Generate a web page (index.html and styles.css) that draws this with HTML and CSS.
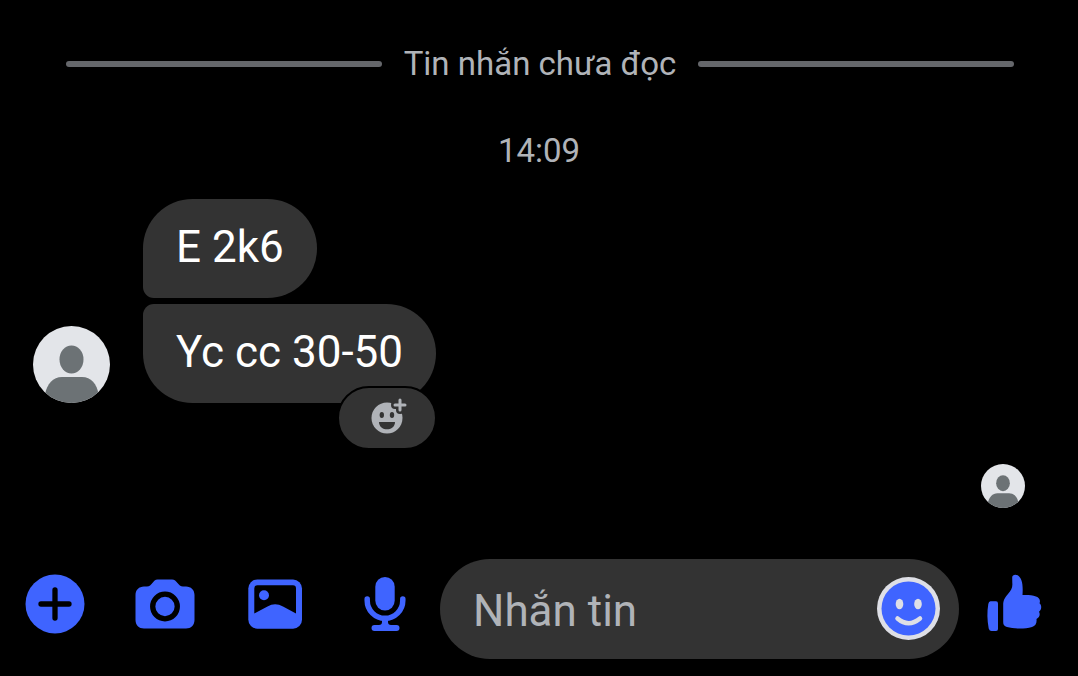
FILE: index.html
```html
<!DOCTYPE html>
<html lang="vi">
<head>
    <meta charset="UTF-8">
    <meta name="viewport" content="width=device-width, initial-scale=1.0">
    <title>Tin nhắn</title>
    <link rel="stylesheet" href="styles.css">
</head>
<body>
    <!-- Shared avatar placeholder -->
    <svg class="sprite" aria-hidden="true">
        <symbol id="avatar" viewBox="0 0 77 77">
            <rect width="77" height="77" fill="#e3e5e9"/>
            <ellipse cx="38.5" cy="33.5" rx="12" ry="14" fill="#6c7275"/>
            <path d="M12 77V68C14 58 20 51 29 51H49C58 51 64 58 65.500 68V77Z" fill="#6c7275"/>
        </symbol>
    </svg>

    <main class="chat">
        <div class="unread">
            <span class="unread-text">Tin nhắn chưa đọc</span>
        </div>
        <time class="time">14:09</time>

        <section class="thread">
            <svg class="avatar"><use href="#avatar"/></svg>
            <div class="messages">
                <p class="bubble first">E 2k6</p>
                <div class="bubble-wrap">
                    <p class="bubble last">Yc cc 30-50</p>
                    <button class="react" type="button" aria-label="Bày tỏ cảm xúc">
                        <svg class="react-icon" viewBox="0 0 40 40">
                            <circle cx="20" cy="20" r="15.500" fill="#b0b3b8"/>
                            <g fill="#333">
                                <ellipse cx="14.800" cy="17" rx="2.200" ry="3"/>
                                <ellipse cx="25" cy="17" rx="2.200" ry="3"/>
                                <path d="M12.500 24H27.500Q28.300 24 28 25C27 29.500 24 31.300 20 31.300S13 29.500 12 25Q11.700 24 12.500 24Z"/>
                            </g>
                            <path d="M33 2V12M28 7H38" stroke="#333" stroke-width="8" stroke-linecap="round"/>
                            <path d="M33 2V12M28 7H38" stroke="#b0b3b8" stroke-width="3" stroke-linecap="round"/>
                        </svg>
                    </button>
                </div>
            </div>
        </section>

        <div class="seen">
            <svg class="avatar small"><use href="#avatar"/></svg>
        </div>
    </main>

    <form class="composer">
        <button class="tool" type="button" aria-label="Thêm">
            <svg class="icon" viewBox="0 0 66 66">
                <circle cx="33" cy="33" r="29.500" fill="#3f64ff"/>
                <path d="M19 33H47M33 19V47" stroke="#000" stroke-width="5.300" stroke-linecap="round"/>
            </svg>
        </button>
        <button class="tool" type="button" aria-label="Máy ảnh">
            <svg class="icon" viewBox="0 0 66 66">
                <path d="M25.500 8.500H40C45 8.500 46 15.500 51 15.500H54C59 15.500 62.500 19 62.500 24V49C62.500 54 59 57.500 54 57.500H12C7 57.500 3.500 54 3.500 49V24C3.500 19 7 15.500 12 15.500H15C20 15.500 21 8.500 25.500 8.500Z" fill="#3f64ff"/>
                <circle cx="33" cy="35.500" r="12.300" fill="none" stroke="#000" stroke-width="5.300"/>
            </svg>
        </button>
        <button class="tool" type="button" aria-label="Thư viện ảnh">
            <svg class="icon" viewBox="0 0 66 66">
                <rect x="6.300" y="8.500" width="53.700" height="49.200" rx="9" fill="#3f64ff"/>
                <path d="M12.300 17.500Q12.300 14.300 15.500 14.300H51Q54 14.300 54 17.500V42.500L41 35.500Q33 31 25.500 35.500L12.300 42.500Z" fill="#000"/>
                <circle cx="22" cy="24.300" r="5" fill="#3f64ff"/>
            </svg>
        </button>
        <button class="tool" type="button" aria-label="Ghi âm">
            <svg class="icon" viewBox="0 0 66 66">
                <rect x="23.300" y="6" width="19.400" height="33.500" rx="9.700" fill="#3f64ff"/>
                <path d="M15.200 28V29.500A17.800 17.800 0 0 0 50.800 29.500V28" fill="none" stroke="#3f64ff" stroke-width="5.500" stroke-linecap="round"/>
                <path d="M30 47H36V51Q36 54 39 54H44.500A3 3 0 0 1 44.500 60H22.500A3 3 0 0 1 22.500 54H27Q30 54 30 51Z" fill="#3f64ff"/>
            </svg>
        </button>

        <div class="field">
            <input class="field-input" type="text" placeholder="Nhắn tin" aria-label="Nhắn tin">
            <button class="emoji" type="button" aria-label="Biểu tượng cảm xúc">
                <svg class="emoji-icon" viewBox="0 0 63 63">
                    <circle cx="31.500" cy="31.500" r="31.500" fill="#dedfe6"/>
                    <circle cx="31.500" cy="31.500" r="27" fill="#3f64ff"/>
                    <ellipse cx="22.500" cy="27" rx="3.800" ry="5.300" fill="#dedfe6"/>
                    <ellipse cx="41" cy="27" rx="3.800" ry="5.300" fill="#dedfe6"/>
                    <path d="M20.500 41.500Q31.500 51 43 41.500" fill="none" stroke="#dedfe6" stroke-width="4.500" stroke-linecap="round"/>
                </svg>
            </button>
        </div>

        <button class="tool" type="button" aria-label="Thích">
            <svg class="icon" viewBox="0 0 66 66" fill="#3f64ff">
                <path d="M9.500 30.300H15Q17 30.300 17 32.500V58Q17 60 15 60H10.500Q8.500 60 7.700 57.500Q5.300 45 7.300 33Q7.700 30.300 9.500 30.300Z"/>
                <path d="M31.200 6.500C31.200 3.500 34.500 3 37 4.500C41 7.500 42.200 13 41.500 24C46 23.700 51 24 55 25.500C58.500 26.800 59.700 29.500 58.500 32.300C61 34.500 60.700 38.500 58 40.700C59.500 43.500 58.500 46.500 55.500 48C56 52 54.500 55 51 56C43 58.300 33 57.800 26 56C23.300 55.200 22.200 54 22.200 51V34C22.200 29 24 26.500 27 23C30.500 19 31.700 16 31.300 12Z"/>
            </svg>
        </button>
    </form>
</body>
</html>
```

FILE: styles.css
```css
* {
    box-sizing: border-box;
}

body {
    margin: 0;
    background-color: #000;
    font-family: Roboto, sans-serif;
}

button {
    border: none;
    padding: 0;
    background: none;
    cursor: pointer;
}

svg {
    display: block;
}

.sprite {
    display: none;
}

.chat {
    display: flex;
    flex-direction: column;
    padding-top: 44px;
}

/* "Unread messages" line */
.unread {
    display: flex;
    align-items: center;
    gap: 22px;
    margin: 0 64px 0 66px;
    color: #b0b3b8;
    font-size: 33px;
    line-height: 40px;
}

.unread::before,
.unread::after {
    content: "";
    flex: 1;
    height: 6px;
    border-radius: 3px;
    background-color: #65676b;
}

.time {
    margin-top: 47px;
    text-align: center;
    color: #b0b3b8;
    font-size: 33px;
    line-height: 40px;
}

/* Messages */
.thread {
    display: flex;
    align-items: flex-end;
    gap: 33px;
    margin-top: 28px;
    padding: 0 33px;
}

.avatar {
    flex: none;
    width: 77px;
    height: 77px;
    border-radius: 50%;
}

.avatar.small {
    width: 44px;
    height: 44px;
}

.messages {
    display: flex;
    flex-direction: column;
    align-items: flex-start;
    gap: 6px;
}

.bubble-wrap {
    position: relative;
}

.bubble {
    margin: 0;
    padding: 22px 33px 24px;
    border-radius: 50px;
    background-color: #333;
    color: #fff;
    font-size: 44px;
    line-height: 53px;
}

.bubble.first {
    border-bottom-left-radius: 11px;
}

.bubble.last {
    border-top-left-radius: 11px;
}

/* Sits over the corner of the last bubble */
.react {
    position: absolute;
    right: -1px;
    bottom: -47px;
    display: flex;
    align-items: center;
    justify-content: center;
    width: 100px;
    height: 64px;
    border: 2px solid #000;
    border-radius: 32px;
    background-color: #333;
}

.react-icon {
    width: 40px;
    height: 40px;
}

.seen {
    display: flex;
    justify-content: flex-end;
    margin-top: 61px;
    padding-right: 53px;
}

/* Bottom bar */
.composer {
    display: flex;
    align-items: center;
    margin-top: 51px;
    padding: 0 9px 17px 0;
}

.tool {
    display: flex;
    justify-content: center;
    flex: none;
    width: 110px;
    padding-bottom: 10px;
}

.icon {
    width: 66px;
    height: 66px;
}

.field {
    display: flex;
    align-items: center;
    flex: 1;
    min-width: 0;
    height: 100px;
    padding: 0 19px 2px 33px;
    border-radius: 50px;
    background-color: #333;
}

.field-input {
    flex: 1;
    min-width: 0;
    padding: 6px 0 0;
    border: none;
    outline: none;
    background: none;
    color: #fff;
    font-family: inherit;
    font-size: 44px;
}

.field-input::placeholder {
    color: #b0b3b8;
    opacity: 1;
}

.emoji-icon {
    width: 63px;
    height: 63px;
}
```
